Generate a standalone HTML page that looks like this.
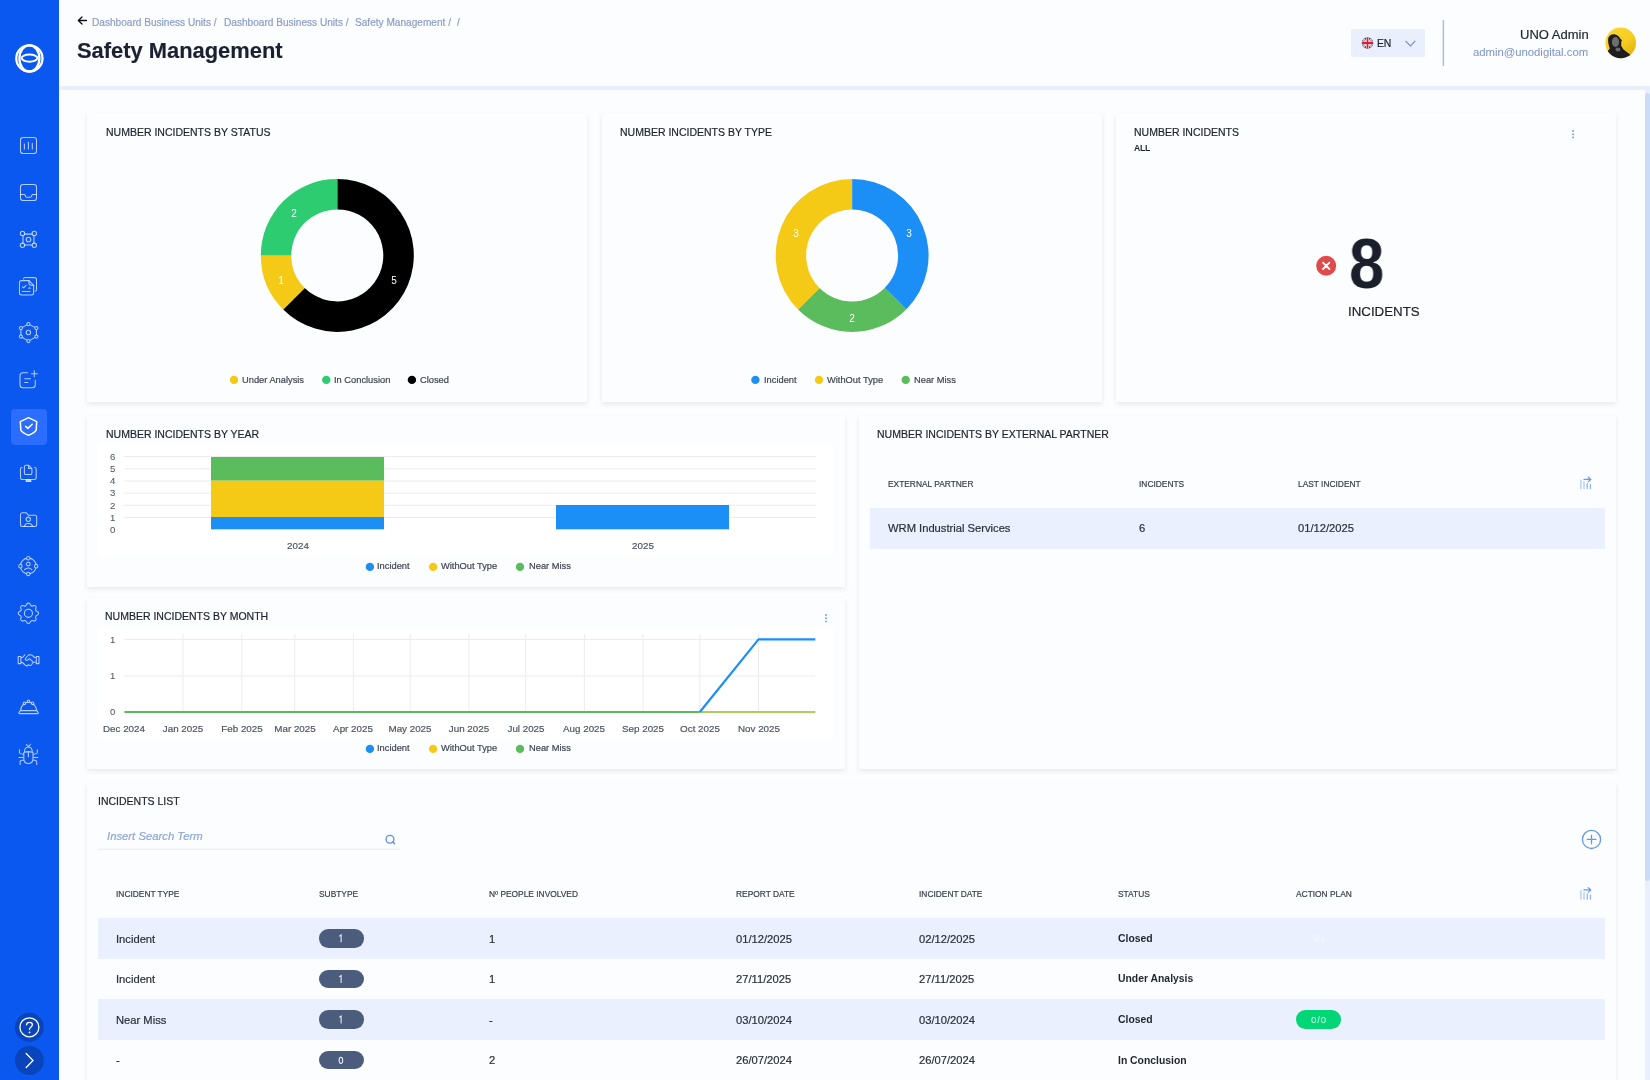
<!DOCTYPE html><html><head><meta charset="utf-8"><title>Safety Management</title><style>
*{margin:0;padding:0;box-sizing:border-box}
html,body{width:1650px;height:1080px;overflow:hidden;background:#fcfdff;font-family:"Liberation Sans", sans-serif}
.t{position:absolute;white-space:nowrap;line-height:1;will-change:transform;-webkit-text-stroke:0.2px currentColor}
.r{position:absolute}
.card{position:absolute;background:#fcfdff;box-shadow:0 2px 5px rgba(0,0,0,0.085)}
svg{position:absolute;left:0;top:0;overflow:visible}
</style></head><body>
<div class="r" style="left:59px;top:0px;width:1591px;height:86px;background:#fcfdff;"></div>
<div class="r" style="left:59px;top:86px;width:1591px;height:4px;background:#e9f0fd;"></div>
<svg width="1650" height="100" style="left:0;top:0"><path d="M86.5,20.5 H78.5 M82,17 L78.3,20.5 L82,24" fill="none" stroke="#0d0f14" stroke-width="1.3" stroke-linecap="round" stroke-linejoin="round"/></svg>
<div class="t" style="left:92.30px;top:17.55px;font-size:10.1px;color:#8b9dc6;font-weight:normal;font-style:normal;">Dashboard Business Units /</div>
<div class="t" style="left:223.90px;top:17.55px;font-size:10.1px;color:#8b9dc6;font-weight:normal;font-style:normal;">Dashboard Business Units /</div>
<div class="t" style="left:354.90px;top:17.55px;font-size:10.1px;color:#8b9dc6;font-weight:normal;font-style:normal;">Safety Management /</div>
<div class="t" style="left:457.20px;top:17.55px;font-size:10.1px;color:#8b9dc6;font-weight:normal;font-style:normal;">/</div>
<div class="t" style="left:77.00px;top:40.46px;font-size:21.9px;color:#1b2030;font-weight:bold;font-style:normal;-webkit-text-stroke:0.15px currentColor;">Safety Management</div>
<div class="r" style="left:1351px;top:29px;width:74px;height:28px;background:#e9effc;"></div>
<svg width="1650" height="100" style="left:0;top:0">
<defs><clipPath id="fc"><circle cx="1367.5" cy="43" r="5.7"/></clipPath></defs>
<g clip-path="url(#fc)"><rect x="1361" y="37" width="13" height="13" fill="#2a4fa8"/>
<path d="M1361,37 L1374,49 M1374,37 L1361,49" stroke="#fff" stroke-width="2"/>
<path d="M1361,37 L1374,49 M1374,37 L1361,49" stroke="#d8202c" stroke-width="0.7"/>
<path d="M1367.5,37 V49 M1361,43 H1374" stroke="#fff" stroke-width="3"/>
<path d="M1367.5,37 V49 M1361,43 H1374" stroke="#d8202c" stroke-width="1.8"/></g>
<path d="M1405.5,40.8 L1410.4,45.8 L1415.3,40.8" fill="none" stroke="#7891c4" stroke-width="1.2"/>
<rect x="1442.6" y="20" width="1.5" height="46" fill="#a9bde7"/>
</svg>
<div class="t" style="left:1376.70px;top:39.10px;font-size:10.4px;color:#1b2030;font-weight:normal;font-style:normal;letter-spacing:-0.3px;">EN</div>
<div class="t" style="right:61.80px;top:28.00px;font-size:13.0px;color:#1f2430;font-weight:normal;font-style:normal;">UNO Admin</div>
<div class="t" style="right:61.80px;top:46.83px;font-size:11.3px;color:#7e97c9;font-weight:normal;font-style:normal;-webkit-text-stroke:0.05px currentColor;">admin@unodigital.com</div>
<svg width="1650" height="100" style="left:0;top:0">
<defs><linearGradient id="av" x1="0.2" y1="0.1" x2="0.9" y2="0.9"><stop offset="0" stop-color="#f9d52e"/><stop offset="0.55" stop-color="#f6cc22"/><stop offset="1" stop-color="#e4b10e"/></linearGradient>
<clipPath id="avc"><circle cx="1620.7" cy="42.9" r="15.3"/></clipPath></defs>
<circle cx="1620.7" cy="42.9" r="15.3" fill="url(#av)"/>
<g clip-path="url(#avc)">
<path d="M1604,52 L1607.6,51.3 L1609.8,48.5 C1608.5,45 1607.5,40 1608.5,37.5 C1610,34.5 1613,33.8 1616,34.8 C1618.5,35.8 1619.5,37 1620.2,38.5 L1622,40.3 L1621.2,42 C1621.3,43.5 1621.5,45 1621,45.5 L1623.5,49.5 L1630,54.5 L1637,59 L1637,62 L1604,62 Z" fill="#1e1e1e"/>
<ellipse cx="1615.5" cy="42" rx="3.6" ry="5" fill="#8a8a8a" fill-opacity="0.75"/>
<ellipse cx="1618" cy="49.5" rx="2.5" ry="2" fill="#9a9a9a" fill-opacity="0.6"/>
</g></svg>
<div class="r" style="left:0px;top:0px;width:59px;height:1080px;background:#0b58f0;"></div>
<div class="r" style="left:11px;top:409px;width:36px;height:36px;background:#2a6dff;border-radius:4px;"></div>
<svg width="59" height="1080" style="left:0;top:0"><g fill="none" stroke="#fff" stroke-width="2.3"><circle cx="29.4" cy="58.4" r="13.1"/><ellipse cx="29.4" cy="58.4" rx="10" ry="13.1"/><ellipse cx="29.5" cy="58.1" rx="7.9" ry="3.6" stroke-width="2"/></g><g fill="none" stroke="#fff" stroke-opacity="0.7" stroke-width="1.05" stroke-linecap="round" stroke-linejoin="round"><g transform="translate(16.5,133.5)"><rect x="4" y="4" width="16" height="16" rx="2.6"/><path d="M7.9,15.4 V10.6 M11.9,15.4 V8.7 M15.8,15.4 V9.7"/></g><g transform="translate(16.5,180.5)"><rect x="4" y="4" width="16" height="16" rx="2.6"/><path d="M4,14 H7.8 Q8.3,14 8.5,14.5 L9.3,16.2 Q9.6,16.7 10.2,16.7 H13.8 Q14.4,16.7 14.7,16.2 L15.5,14.5 Q15.7,14 16.2,14 H20"/></g><g transform="translate(16.5,227.5)"><path d="M8.1,6.6 H15.7 M8.1,17.4 H15.7 M6.5,8.1 V15.7 M17.4,8.1 V15.7"/><circle cx="6" cy="6" r="2.2"/><circle cx="17.8" cy="6" r="2.2"/><circle cx="6" cy="17.8" r="2.2"/><circle cx="17.8" cy="17.8" r="2.2"/><circle cx="12" cy="12" r="2.3"/></g><g transform="translate(16.5,274)"><path d="M7,4.9 A1.8,1.8 0 0 1 8.7,3.6 H18 A2,2 0 0 1 20,5.6 V15.4 A2,2 0 0 1 18.6,17.3"/><path d="M3,8.6 A2,2 0 0 1 5,6.6 H12.5 L17.1,11.3 V19 A2,2 0 0 1 15.1,21 H5 A2,2 0 0 1 3,19 Z"/><path d="M12.5,6.6 V9.3 A2,2 0 0 0 14.5,11.3 H17.1 M6.1,12.8 L7.1,13.8 L9.6,11.3 M12.2,14.3 Q13,13.3 13.8,14.3 M5.8,17.4 H13.5"/></g><g transform="translate(16.5,320.5)"><path d="M11.9,3.6 L19.9,7.6 V16.1 L11.9,20.6 L4.4,16.1 V7.6 Z"/><circle cx="11.9" cy="3.6" r="1.6" fill="#0b58f0"/><circle cx="19.9" cy="7.6" r="1.6" fill="#0b58f0"/><circle cx="19.9" cy="16.1" r="1.6" fill="#0b58f0"/><circle cx="11.9" cy="20.6" r="1.6" fill="#0b58f0"/><circle cx="4.4" cy="16.1" r="1.6" fill="#0b58f0"/><circle cx="4.4" cy="7.6" r="1.6" fill="#0b58f0"/><circle cx="11.9" cy="12" r="2.2"/></g><g transform="translate(16.5,367.5)"><path d="M11.1,5.2 H6.5 A3,3 0 0 0 3.5,8.2 V17.3 A3,3 0 0 0 6.5,20.3 H15.8 A3,3 0 0 0 18.8,17.3 V12.8 M8.2,11.3 H14 M8.2,14.9 H11.3 M17.8,3.2 V9.2 M14.8,6.2 H20.8"/></g><g transform="translate(16.5,460.5)"><path d="M5.6,7 H5.5 A1.5,1.5 0 0 0 4,8.5 V17.4 A1.5,1.5 0 0 0 5.5,18.9 H18.2 A1.5,1.5 0 0 0 19.7,17.4 V8.5 A1.5,1.5 0 0 0 18.2,7 H18.1"/><path d="M9.9,19.3 L9.6,20.9 H14.4 L14.1,19.3 Z" fill="#fff" fill-opacity="0.68"/><path d="M7.9,6.2 A1.5,1.5 0 0 1 9.4,4.7 H12 L15.4,8.2 V12.5 A1.5,1.5 0 0 1 13.9,14 H9.4 A1.5,1.5 0 0 1 7.9,12.5 Z M12,4.7 V8 H15.4"/></g><g transform="translate(16.5,507.5)"><path d="M4,7.3 A2,2 0 0 1 6,5.3 H9.8 L12,7.8 H18.2 A2,2 0 0 1 20.2,9.8 V16.9 A2,2 0 0 1 18.2,18.9 H6 A2,2 0 0 1 4,16.9 Z"/><circle cx="11.8" cy="11.8" r="2.2"/><path d="M7.5,18.9 L9.6,16.4 Q10,16 10.6,16 H13.2 Q13.8,16 14.2,16.4 L16.5,18.9"/></g><g transform="translate(16.5,554)"><circle cx="11.8" cy="12" r="7.9"/><circle cx="11.8" cy="4.2" r="1.7" fill="#0b58f0"/><circle cx="3.9" cy="12.2" r="1.7" fill="#0b58f0"/><circle cx="19.7" cy="12.2" r="1.7" fill="#0b58f0"/><circle cx="11.8" cy="19.9" r="1.7" fill="#0b58f0"/><circle cx="11.8" cy="10.1" r="1.9"/><path d="M7.9,15.6 Q11.8,12.3 15.3,15.6"/></g><g transform="translate(14.840,599.740) scale(1.13)" stroke-width="0.929"><path d="M10.325,4.317c.426,-1.756,2.924,-1.756,3.35,0a1.724,1.724,0,0,0,2.573,1.066c1.543,-.94,3.31,.826,2.37,2.37a1.724,1.724,0,0,0,1.065,2.572c1.756,.426,1.756,2.924,0,3.35a1.724,1.724,0,0,0,-1.066,2.573c.94,1.543,-.826,3.31,-2.37,2.37a1.724,1.724,0,0,0,-2.572,1.065c-.426,1.756,-2.924,1.756,-3.35,0a1.724,1.724,0,0,0,-2.573,-1.066c-1.543,.94,-3.31,-.826,-2.37,-2.37a1.724,1.724,0,0,0,-1.065,-2.572c-1.756,-.426,-1.756,-2.924,0,-3.35a1.724,1.724,0,0,0,1.066,-2.573c-.94,-1.543,.826,-3.31,2.37,-2.37c1,.608,2.296,.07,2.572,-1.065z"/><circle cx="12" cy="12" r="3.6"/></g><path d="M18.2,656.5 H20.9 V663.6 H18.2 Z M36.3,656.5 H39 V663.6 H36.3 Z M21,657.5 H22.5 L24.8,654.8 M36.3,657.5 H34.6 L32.2,655.3 Q30.5,654.2 28.5,655 L25.4,658.5 Q25,659.6 26,660.2 Q27,660.6 28.2,659.6 L29.5,658.6 L33.2,662.2 H36.3 M21,662.5 H22.5 L25.5,665.4 Q26.5,666.3 27.5,665.5 L28.5,664.7 L29.5,665.3 Q30.5,665.8 31.5,664.8 L33.2,662.2"/><path d="M20.3,710.6 H36.9 L38.2,712.6 Q38.4,713.6 37.4,713.6 H19.8 Q18.8,713.6 19,712.6 Z M20.6,710.6 Q21,706 23.6,704.2 M33.4,704.2 Q36.2,706 36.6,710.6 M25.8,702.9 L27.2,702.1 M29.8,702.1 L31.3,702.9"/><circle cx="24.5" cy="703.3" r="1.3"/><circle cx="28.5" cy="701.3" r="1.3"/><circle cx="32.6" cy="703.3" r="1.3"/><path d="M24.5,751.5 Q24.8,747.2 28.4,747 Q32,747.2 32.3,751.5 M26.5,744.5 L27.5,746 Q28.4,746.8 29.3,746 L30.4,744.2 M23.8,752.4 Q28.4,750.8 33,752.4 V758.5 Q33,763.5 28.4,763.5 Q23.8,763.5 23.8,758.5 Z M28.4,752 V756.8 M19.5,749.8 V752.5 Q19.8,754.2 23.8,754.2 M37.3,749.8 V752.5 Q37,754.2 33,754.2 M19,757.5 H23.8 M37.8,757.5 H33 M20.1,764.5 V761.5 Q20.3,760.2 23.8,760 M36.7,764.5 V761.5 Q36.5,760.2 33,760"/></g><g fill="none" stroke="#fff" stroke-width="1.5" stroke-linecap="round" stroke-linejoin="round"><path d="M28.5,417.6 L36.7,421.7 L36.2,430 C35.4,432.2 31,434.6 28.5,435.2 C26,434.6 21.6,432.2 20.8,430 L20.3,421.7 Z"/><path d="M25.6,426.4 L27.9,428.4 L32.2,424.2"/></g><circle cx="29.4" cy="1027.2" r="14.5" fill="#0a44bb"/><circle cx="29.4" cy="1060.6" r="14.5" fill="#0a44bb"/><g fill="none" stroke="#fff" stroke-width="1.3" stroke-linecap="round"><circle cx="29.4" cy="1027.3" r="9.5"/><path d="M26.6,1024.8 C26.6,1021.5 32.4,1021.5 32.4,1024.8 C32.4,1027 29.5,1027 29.5,1029.5"/><path d="M26.2,1053.5 L33,1060.5 L26.2,1067.5"/></g><circle cx="29.5" cy="1032.4" r="0.9" fill="#fff"/></svg>
<div class="r" style="left:1645px;top:90px;width:5px;height:990px;background:#e9effc;"></div>
<div class="r" style="left:1645px;top:93px;width:5px;height:788px;background:#cbdcf9;border-radius:3px;"></div>
<div class="card" style="left:87px;top:113px;width:500px;height:289px"></div>
<div class="card" style="left:602px;top:113px;width:500px;height:289px"></div>
<div class="card" style="left:1116px;top:113px;width:500px;height:289px"></div>
<div class="card" style="left:87px;top:416px;width:758px;height:171px"></div>
<div class="card" style="left:87px;top:598px;width:758px;height:171px"></div>
<div class="card" style="left:859px;top:416px;width:757px;height:353px"></div>
<div class="card" style="left:87px;top:783px;width:1529px;height:317px"></div>
<div class="t" style="left:105.90px;top:126.91px;font-size:10.5px;color:#1e2330;font-weight:normal;font-style:normal;">NUMBER INCIDENTS BY STATUS</div>
<div class="t" style="left:619.50px;top:126.91px;font-size:10.5px;color:#1e2330;font-weight:normal;font-style:normal;">NUMBER INCIDENTS BY TYPE</div>
<div class="t" style="left:1134.40px;top:126.91px;font-size:10.5px;color:#1e2330;font-weight:normal;font-style:normal;">NUMBER INCIDENTS</div>
<div class="t" style="left:1134.40px;top:143.52px;font-size:8.6px;color:#1e2330;font-weight:bold;font-style:normal;letter-spacing:-0.2px;-webkit-text-stroke:0;">ALL</div>
<div class="t" style="left:105.70px;top:429.21px;font-size:10.5px;color:#1e2330;font-weight:normal;font-style:normal;">NUMBER INCIDENTS BY YEAR</div>
<div class="t" style="left:105.40px;top:611.11px;font-size:10.5px;color:#1e2330;font-weight:normal;font-style:normal;">NUMBER INCIDENTS BY MONTH</div>
<div class="t" style="left:877.30px;top:429.31px;font-size:10.5px;color:#1e2330;font-weight:normal;font-style:normal;">NUMBER INCIDENTS BY EXTERNAL PARTNER</div>
<div class="t" style="left:98.40px;top:796.31px;font-size:10.5px;color:#1e2330;font-weight:normal;font-style:normal;">INCIDENTS LIST</div>
<svg width="1650" height="1080" style="left:0;top:0"><path d="M337.30,178.90 A76.5,76.5 0 1 1 283.21,309.49 L304.77,287.93 A46,46 0 1 0 337.30,209.40 Z" fill="#000000"/><path d="M283.21,309.49 A76.5,76.5 0 0 1 260.80,255.40 L291.30,255.40 A46,46 0 0 0 304.77,287.93 Z" fill="#f4ca17"/><path d="M260.80,255.40 A76.5,76.5 0 0 1 337.30,178.90 L337.30,209.40 A46,46 0 0 0 291.30,255.40 Z" fill="#2ecc71"/><path d="M852.10,178.90 A76.5,76.5 0 0 1 906.19,309.49 L884.63,287.93 A46,46 0 0 0 852.10,209.40 Z" fill="#1b8ff6"/><path d="M906.19,309.49 A76.5,76.5 0 0 1 798.01,309.49 L819.57,287.93 A46,46 0 0 0 884.63,287.93 Z" fill="#5abc5c"/><path d="M798.01,309.49 A76.5,76.5 0 0 1 852.10,178.90 L852.10,209.40 A46,46 0 0 0 819.57,287.93 Z" fill="#f4ca17"/><circle cx="234" cy="379.9" r="4.2" fill="#f4ca17"/><circle cx="326.3" cy="379.9" r="4.2" fill="#2ecc71"/><circle cx="411.9" cy="379.9" r="4.2" fill="#000000"/><circle cx="755.4" cy="379.9" r="4.2" fill="#1b8ff6"/><circle cx="819" cy="379.9" r="4.2" fill="#f4ca17"/><circle cx="905.7" cy="379.9" r="4.2" fill="#5abc5c"/><circle cx="369.9" cy="566.9" r="4.2" fill="#1b8ff6"/><circle cx="369.9" cy="748.9" r="4.2" fill="#1b8ff6"/><circle cx="433.1" cy="566.9" r="4.2" fill="#f4ca17"/><circle cx="433.1" cy="748.9" r="4.2" fill="#f4ca17"/><circle cx="520" cy="566.9" r="4.2" fill="#5abc5c"/><circle cx="520" cy="748.9" r="4.2" fill="#5abc5c"/><circle cx="1326.2" cy="265.8" r="10" fill="#e04a4a"/><path d="M1323,262.6 L1329.4,269 M1329.4,262.6 L1323,269" stroke="#fff" stroke-width="1.8" stroke-linecap="round"/><circle cx="1573.1" cy="131" r="0.95" fill="#6c9cf5"/><circle cx="1573.1" cy="134.2" r="0.95" fill="#6c9cf5"/><circle cx="1573.1" cy="137.4" r="0.95" fill="#6c9cf5"/><circle cx="826" cy="615" r="0.95" fill="#6c9cf5"/><circle cx="826" cy="618.2" r="0.95" fill="#6c9cf5"/><circle cx="826" cy="621.4" r="0.95" fill="#6c9cf5"/></svg>
<div class="t" style="left:393.89px;transform:translateX(-50%);top:275.77px;font-size:10px;color:#ffffff;font-weight:normal;font-style:normal;-webkit-text-stroke:0;">5</div>
<div class="t" style="left:280.71px;transform:translateX(-50%);top:275.77px;font-size:10px;color:#ffffff;font-weight:normal;font-style:normal;-webkit-text-stroke:0;">1</div>
<div class="t" style="left:293.99px;transform:translateX(-50%);top:209.02px;font-size:10px;color:#ffffff;font-weight:normal;font-style:normal;-webkit-text-stroke:0;">2</div>
<div class="t" style="left:908.69px;transform:translateX(-50%);top:228.90px;font-size:10px;color:#ffffff;font-weight:normal;font-style:normal;-webkit-text-stroke:0;">3</div>
<div class="t" style="left:852.10px;transform:translateX(-50%);top:313.58px;font-size:10px;color:#ffffff;font-weight:normal;font-style:normal;-webkit-text-stroke:0;">2</div>
<div class="t" style="left:795.51px;transform:translateX(-50%);top:228.90px;font-size:10px;color:#ffffff;font-weight:normal;font-style:normal;-webkit-text-stroke:0;">3</div>
<div class="t" style="left:241.70px;top:375.73px;font-size:9.3px;color:#404553;font-weight:normal;font-style:normal;">Under Analysis</div>
<div class="t" style="left:333.80px;top:375.73px;font-size:9.3px;color:#404553;font-weight:normal;font-style:normal;">In Conclusion</div>
<div class="t" style="left:420.30px;top:375.73px;font-size:9.3px;color:#404553;font-weight:normal;font-style:normal;">Closed</div>
<div class="t" style="left:763.70px;top:375.73px;font-size:9.3px;color:#404553;font-weight:normal;font-style:normal;">Incident</div>
<div class="t" style="left:827.00px;top:375.73px;font-size:9.3px;color:#404553;font-weight:normal;font-style:normal;">WithOut Type</div>
<div class="t" style="left:913.70px;top:375.73px;font-size:9.3px;color:#404553;font-weight:normal;font-style:normal;">Near Miss</div>
<div class="t" style="left:377.30px;top:562.23px;font-size:9.3px;color:#404553;font-weight:normal;font-style:normal;">Incident</div>
<div class="t" style="left:440.80px;top:562.23px;font-size:9.3px;color:#404553;font-weight:normal;font-style:normal;">WithOut Type</div>
<div class="t" style="left:528.60px;top:562.23px;font-size:9.3px;color:#404553;font-weight:normal;font-style:normal;">Near Miss</div>
<div class="t" style="left:377.30px;top:744.23px;font-size:9.3px;color:#404553;font-weight:normal;font-style:normal;">Incident</div>
<div class="t" style="left:440.80px;top:744.23px;font-size:9.3px;color:#404553;font-weight:normal;font-style:normal;">WithOut Type</div>
<div class="t" style="left:528.60px;top:744.23px;font-size:9.3px;color:#404553;font-weight:normal;font-style:normal;">Near Miss</div>
<div class="t" style="left:1348.60px;top:229.44px;font-size:70px;color:#1b1f2b;font-weight:bold;font-style:normal;transform:scaleX(0.905);transform-origin:0 0;-webkit-text-stroke:0;">8</div>
<div class="t" style="left:1348.40px;top:304.64px;font-size:13.3px;color:#1b1f2b;font-weight:normal;font-style:normal;">INCIDENTS</div>
<svg width="1650" height="1080" style="left:0;top:0"><rect x="98" y="444" width="735" height="112.5" fill="#ffffff"/><rect x="124.3" y="456.1" width="691.7" height="1" fill="#ececec"/><rect x="124.3" y="468.3" width="691.7" height="1" fill="#ececec"/><rect x="124.3" y="480.5" width="691.7" height="1" fill="#ececec"/><rect x="124.3" y="492.7" width="691.7" height="1" fill="#ececec"/><rect x="124.3" y="504.8" width="691.7" height="1" fill="#ececec"/><rect x="124.3" y="516.9" width="691.7" height="1" fill="#ececec"/><rect x="211" y="457" width="173" height="23.7" fill="#5abc5c"/><rect x="211" y="480.7" width="173" height="36.3" fill="#f4ca17"/><rect x="211" y="517" width="173" height="12.3" fill="#1b8ff6"/><rect x="556" y="505" width="173" height="24.3" fill="#1b8ff6"/><rect x="98" y="627.2" width="735.5" height="111.2" fill="#ffffff"/><rect x="182.58" y="634" width="1" height="78" fill="#ececec"/><rect x="241.26" y="634" width="1" height="78" fill="#ececec"/><rect x="294.26" y="634" width="1" height="78" fill="#ececec"/><rect x="352.94" y="634" width="1" height="78" fill="#ececec"/><rect x="409.72" y="634" width="1" height="78" fill="#ececec"/><rect x="468.40" y="634" width="1" height="78" fill="#ececec"/><rect x="525.19" y="634" width="1" height="78" fill="#ececec"/><rect x="583.87" y="634" width="1" height="78" fill="#ececec"/><rect x="642.55" y="634" width="1" height="78" fill="#ececec"/><rect x="699.33" y="634" width="1" height="78" fill="#ececec"/><rect x="758.01" y="634" width="1" height="78" fill="#ececec"/><rect x="124.4" y="638.9" width="691" height="1" fill="#ececec"/><rect x="124.4" y="675.5" width="691" height="1" fill="#ececec"/><path d="M124.4,712 H699.83" stroke="#5cb85c" stroke-width="2.2" fill="none"/><path d="M699.83,712 H815.3" stroke="#a9cf63" stroke-width="2.2" fill="none"/><path d="M699.83,712 L758.51,639.4 H815.3" stroke="#1b8ff6" stroke-width="2.2" fill="none" stroke-linejoin="round"/></svg>
<div class="t" style="right:1534.40px;top:451.87px;font-size:9.6px;color:#4f5564;font-weight:normal;font-style:normal;-webkit-text-stroke:0.05px currentColor;">6</div>
<div class="t" style="right:1534.40px;top:464.07px;font-size:9.6px;color:#4f5564;font-weight:normal;font-style:normal;-webkit-text-stroke:0.05px currentColor;">5</div>
<div class="t" style="right:1534.40px;top:476.27px;font-size:9.6px;color:#4f5564;font-weight:normal;font-style:normal;-webkit-text-stroke:0.05px currentColor;">4</div>
<div class="t" style="right:1534.40px;top:488.47px;font-size:9.6px;color:#4f5564;font-weight:normal;font-style:normal;-webkit-text-stroke:0.05px currentColor;">3</div>
<div class="t" style="right:1534.40px;top:500.57px;font-size:9.6px;color:#4f5564;font-weight:normal;font-style:normal;-webkit-text-stroke:0.05px currentColor;">2</div>
<div class="t" style="right:1534.40px;top:512.67px;font-size:9.6px;color:#4f5564;font-weight:normal;font-style:normal;-webkit-text-stroke:0.05px currentColor;">1</div>
<div class="t" style="right:1534.40px;top:524.67px;font-size:9.6px;color:#4f5564;font-weight:normal;font-style:normal;-webkit-text-stroke:0.05px currentColor;">0</div>
<div class="t" style="left:297.60px;transform:translateX(-50%);top:540.90px;font-size:9.8px;color:#4f5564;font-weight:normal;font-style:normal;">2024</div>
<div class="t" style="left:642.60px;transform:translateX(-50%);top:540.90px;font-size:9.8px;color:#4f5564;font-weight:normal;font-style:normal;">2025</div>
<div class="t" style="right:1534.40px;top:634.67px;font-size:9.6px;color:#4f5564;font-weight:normal;font-style:normal;-webkit-text-stroke:0.05px currentColor;">1</div>
<div class="t" style="right:1534.40px;top:671.27px;font-size:9.6px;color:#4f5564;font-weight:normal;font-style:normal;-webkit-text-stroke:0.05px currentColor;">1</div>
<div class="t" style="right:1534.40px;top:707.27px;font-size:9.6px;color:#4f5564;font-weight:normal;font-style:normal;-webkit-text-stroke:0.05px currentColor;">0</div>
<div class="t" style="left:124.40px;transform:translateX(-50%);top:723.50px;font-size:9.8px;color:#4f5564;font-weight:normal;font-style:normal;">Dec 2024</div>
<div class="t" style="left:183.08px;transform:translateX(-50%);top:723.50px;font-size:9.8px;color:#4f5564;font-weight:normal;font-style:normal;">Jan 2025</div>
<div class="t" style="left:241.76px;transform:translateX(-50%);top:723.50px;font-size:9.8px;color:#4f5564;font-weight:normal;font-style:normal;">Feb 2025</div>
<div class="t" style="left:294.76px;transform:translateX(-50%);top:723.50px;font-size:9.8px;color:#4f5564;font-weight:normal;font-style:normal;">Mar 2025</div>
<div class="t" style="left:353.44px;transform:translateX(-50%);top:723.50px;font-size:9.8px;color:#4f5564;font-weight:normal;font-style:normal;">Apr 2025</div>
<div class="t" style="left:410.22px;transform:translateX(-50%);top:723.50px;font-size:9.8px;color:#4f5564;font-weight:normal;font-style:normal;">May 2025</div>
<div class="t" style="left:468.90px;transform:translateX(-50%);top:723.50px;font-size:9.8px;color:#4f5564;font-weight:normal;font-style:normal;">Jun 2025</div>
<div class="t" style="left:525.69px;transform:translateX(-50%);top:723.50px;font-size:9.8px;color:#4f5564;font-weight:normal;font-style:normal;">Jul 2025</div>
<div class="t" style="left:584.37px;transform:translateX(-50%);top:723.50px;font-size:9.8px;color:#4f5564;font-weight:normal;font-style:normal;">Aug 2025</div>
<div class="t" style="left:643.05px;transform:translateX(-50%);top:723.50px;font-size:9.8px;color:#4f5564;font-weight:normal;font-style:normal;">Sep 2025</div>
<div class="t" style="left:699.83px;transform:translateX(-50%);top:723.50px;font-size:9.8px;color:#4f5564;font-weight:normal;font-style:normal;">Oct 2025</div>
<div class="t" style="left:758.51px;transform:translateX(-50%);top:723.50px;font-size:9.8px;color:#4f5564;font-weight:normal;font-style:normal;">Nov 2025</div>
<div class="t" style="left:887.60px;top:480.19px;font-size:8.4px;color:#3a3f4b;font-weight:normal;font-style:normal;">EXTERNAL PARTNER</div>
<div class="t" style="left:1139.10px;top:480.19px;font-size:8.4px;color:#3a3f4b;font-weight:normal;font-style:normal;">INCIDENTS</div>
<div class="t" style="left:1297.90px;top:480.19px;font-size:8.4px;color:#3a3f4b;font-weight:normal;font-style:normal;">LAST INCIDENT</div>
<div class="r" style="left:870px;top:508px;width:735px;height:41px;background:#eaf0fe;"></div>
<div class="t" style="left:887.60px;top:523.02px;font-size:11.2px;color:#2a2f3a;font-weight:normal;font-style:normal;">WRM Industrial Services</div>
<div class="t" style="left:1139.10px;top:523.02px;font-size:11.2px;color:#2a2f3a;font-weight:normal;font-style:normal;">6</div>
<div class="t" style="left:1297.90px;top:523.02px;font-size:11.2px;color:#2a2f3a;font-weight:normal;font-style:normal;">01/12/2025</div>
<svg width="1650" height="1080" style="left:0;top:0"><g transform="translate(1580,477)" fill="none" stroke-width="1.25" stroke-linecap="round"><path d="M0.9,3.2 V11.6 M4,4.7 V11.6" stroke="#a9c6f7"/><path d="M7.3,6.3 V11.6 M10.4,7.5 V11.6" stroke="#8db2f6"/><path d="M4,2.4 H10.8 M8.3,0.2 L10.8,2.4 L8.3,4.6" stroke="#6a98f2"/></g><g transform="translate(1580,887.5)" fill="none" stroke-width="1.25" stroke-linecap="round"><path d="M0.9,3.2 V11.6 M4,4.7 V11.6" stroke="#a9c6f7"/><path d="M7.3,6.3 V11.6 M10.4,7.5 V11.6" stroke="#8db2f6"/><path d="M4,2.4 H10.8 M8.3,0.2 L10.8,2.4 L8.3,4.6" stroke="#6a98f2"/></g><rect x="98" y="848.8" width="302.5" height="1" fill="#e4ebfa"/><g fill="none" stroke="#5a8df2" stroke-width="1.35" stroke-linecap="round"><circle cx="390" cy="839.2" r="3.9"/><path d="M392.8,842 L394.6,843.8"/></g><g fill="none" stroke="#6496f2" stroke-width="1.3" stroke-linecap="round"><circle cx="1591.5" cy="839.4" r="9.1"/><path d="M1591.5,835.2 V843.7 M1587.2,839.4 H1595.8"/></g></svg>
<div class="t" style="left:107.30px;top:831.43px;font-size:11.3px;color:#8ea6d8;font-weight:normal;font-style:italic;">Insert Search Term</div>
<div class="t" style="left:116.30px;top:890.39px;font-size:8.4px;color:#3a3f4b;font-weight:normal;font-style:normal;">INCIDENT TYPE</div>
<div class="t" style="left:319.00px;top:890.39px;font-size:8.4px;color:#3a3f4b;font-weight:normal;font-style:normal;">SUBTYPE</div>
<div class="t" style="left:489.10px;top:890.39px;font-size:8.4px;color:#3a3f4b;font-weight:normal;font-style:normal;">Nº PEOPLE INVOLVED</div>
<div class="t" style="left:735.50px;top:890.39px;font-size:8.4px;color:#3a3f4b;font-weight:normal;font-style:normal;">REPORT DATE</div>
<div class="t" style="left:919.40px;top:890.39px;font-size:8.4px;color:#3a3f4b;font-weight:normal;font-style:normal;">INCIDENT DATE</div>
<div class="t" style="left:1117.60px;top:890.39px;font-size:8.4px;color:#3a3f4b;font-weight:normal;font-style:normal;">STATUS</div>
<div class="t" style="left:1295.70px;top:890.39px;font-size:8.4px;color:#3a3f4b;font-weight:normal;font-style:normal;">ACTION PLAN</div>
<div class="r" style="left:98px;top:918px;width:1507px;height:41px;background:#eaf0fe;"></div>
<div class="t" style="left:116.30px;top:933.62px;font-size:11.2px;color:#2a2f3a;font-weight:normal;font-style:normal;">Incident</div>
<div class="r" style="left:319px;top:929.30px;width:45px;height:18.4px;border-radius:9.2px;background:#4c5c7d"></div>
<svg width="1650" height="1080" style="left:0;top:0"><path d="M339.3,936.30 L341.1,934.90 V942.30" fill="none" stroke="#eef1f7" stroke-width="1.05"/></svg>
<div class="t" style="left:489.10px;top:933.62px;font-size:11.2px;color:#2a2f3a;font-weight:normal;font-style:normal;">1</div>
<div class="t" style="left:735.50px;top:933.62px;font-size:11.2px;color:#2a2f3a;font-weight:normal;font-style:normal;">01/12/2025</div>
<div class="t" style="left:919.40px;top:933.62px;font-size:11.2px;color:#2a2f3a;font-weight:normal;font-style:normal;">02/12/2025</div>
<div class="t" style="left:1117.60px;top:933.80px;font-size:10.4px;color:#1f2430;font-weight:bold;font-style:normal;-webkit-text-stroke:0;">Closed</div>
<div class="t" style="left:1318.50px;transform:translateX(-50%);top:934.25px;font-size:8.8px;color:#f6f9ff;font-weight:normal;font-style:normal;-webkit-text-stroke:0;">0/1</div>
<div class="t" style="left:116.30px;top:974.22px;font-size:11.2px;color:#2a2f3a;font-weight:normal;font-style:normal;">Incident</div>
<div class="r" style="left:319px;top:969.90px;width:45px;height:18.4px;border-radius:9.2px;background:#4c5c7d"></div>
<svg width="1650" height="1080" style="left:0;top:0"><path d="M339.3,976.90 L341.1,975.50 V982.90" fill="none" stroke="#eef1f7" stroke-width="1.05"/></svg>
<div class="t" style="left:489.10px;top:974.22px;font-size:11.2px;color:#2a2f3a;font-weight:normal;font-style:normal;">1</div>
<div class="t" style="left:735.50px;top:974.22px;font-size:11.2px;color:#2a2f3a;font-weight:normal;font-style:normal;">27/11/2025</div>
<div class="t" style="left:919.40px;top:974.22px;font-size:11.2px;color:#2a2f3a;font-weight:normal;font-style:normal;">27/11/2025</div>
<div class="t" style="left:1117.60px;top:974.40px;font-size:10.4px;color:#1f2430;font-weight:bold;font-style:normal;-webkit-text-stroke:0;">Under Analysis</div>
<div class="r" style="left:98px;top:999.2px;width:1507px;height:40.799999999999955px;background:#eaf0fe;"></div>
<div class="t" style="left:116.30px;top:1014.72px;font-size:11.2px;color:#2a2f3a;font-weight:normal;font-style:normal;">Near Miss</div>
<div class="r" style="left:319px;top:1010.40px;width:45px;height:18.4px;border-radius:9.2px;background:#4c5c7d"></div>
<svg width="1650" height="1080" style="left:0;top:0"><path d="M339.3,1017.40 L341.1,1016.00 V1023.40" fill="none" stroke="#eef1f7" stroke-width="1.05"/></svg>
<div class="t" style="left:489.10px;top:1014.72px;font-size:11.2px;color:#2a2f3a;font-weight:normal;font-style:normal;">-</div>
<div class="t" style="left:735.50px;top:1014.72px;font-size:11.2px;color:#2a2f3a;font-weight:normal;font-style:normal;">03/10/2024</div>
<div class="t" style="left:919.40px;top:1014.72px;font-size:11.2px;color:#2a2f3a;font-weight:normal;font-style:normal;">03/10/2024</div>
<div class="t" style="left:1117.60px;top:1014.90px;font-size:10.4px;color:#1f2430;font-weight:bold;font-style:normal;-webkit-text-stroke:0;">Closed</div>
<div class="r" style="left:1296px;top:1010.30px;width:45px;height:18.6px;border-radius:9.3px;background:#02d677"></div>
<div class="t" style="left:1318.80px;transform:translateX(-50%);top:1015.07px;font-size:9.6px;color:#dff8ea;font-weight:normal;font-style:normal;letter-spacing:0.9px;-webkit-text-stroke:0;">0/0</div>
<div class="t" style="left:116.30px;top:1055.37px;font-size:11.2px;color:#2a2f3a;font-weight:normal;font-style:normal;">-</div>
<div class="r" style="left:319px;top:1051.05px;width:45px;height:18.4px;border-radius:9.2px;background:#4c5c7d"></div>
<svg width="1650" height="1080" style="left:0;top:0"><ellipse cx="340.9" cy="1060.35" rx="1.8" ry="3.1" fill="none" stroke="#eef1f7" stroke-width="1.05"/></svg>
<div class="t" style="left:489.10px;top:1055.37px;font-size:11.2px;color:#2a2f3a;font-weight:normal;font-style:normal;">2</div>
<div class="t" style="left:735.50px;top:1055.37px;font-size:11.2px;color:#2a2f3a;font-weight:normal;font-style:normal;">26/07/2024</div>
<div class="t" style="left:919.40px;top:1055.37px;font-size:11.2px;color:#2a2f3a;font-weight:normal;font-style:normal;">26/07/2024</div>
<div class="t" style="left:1117.60px;top:1055.55px;font-size:10.4px;color:#1f2430;font-weight:bold;font-style:normal;-webkit-text-stroke:0;">In Conclusion</div>
</body></html>
